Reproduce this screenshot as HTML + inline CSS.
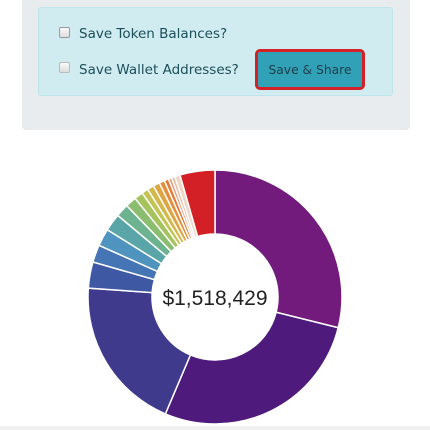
<!DOCTYPE html>
<html><head><meta charset="utf-8"><style>
body{margin:0;width:430px;height:430px;background:#fff;position:relative;overflow:hidden;font-family:"Liberation Sans",sans-serif}
.panel{position:absolute;left:22px;top:-5px;width:388px;height:135px;background:#e9ecef;border-radius:4px}
.info{position:absolute;left:38px;top:7px;width:355px;height:89px;background:#d1ecf1;border:1px solid #bee5eb;border-radius:3px;box-sizing:border-box}
.cb{position:absolute;width:11px;height:11px;border:1px solid #999;border-radius:2px;background:linear-gradient(#fafafa,#ddd);box-sizing:border-box}
.lbl{position:absolute;color:#1b4f5a;font-family:"DejaVu Sans","Liberation Sans",sans-serif;font-size:13.5px}
.btn{position:absolute;left:255px;top:49px;width:110px;height:41px;border:3px solid #d42027;border-radius:5px;box-sizing:border-box;background:#31a1b8;color:#1d3d48;font-size:12.3px;font-family:"DejaVu Sans",sans-serif;text-align:center;line-height:36px}
.line{position:absolute;left:0;top:426px;width:430px;height:4px;background:#f0f0f0}
</style></head><body>
<div class="panel"></div>
<div class="info"></div>
<div class="cb" style="left:59px;top:27px"></div>
<div class="lbl" style="left:79px;top:26px">Save Token Balances?</div>
<div class="cb" style="left:59px;top:62px;border-color:#bbb"></div>
<div class="lbl" style="left:79px;top:62px">Save Wallet Addresses?</div>
<div class="btn">Save &amp; Share</div>
<svg id="d" width="430" height="430" style="position:absolute;left:0;top:0"></svg>
<div class="line"></div>
<script>
var segs=[[0,104,'#721b7c'],[104,203,'#4e1a7b'],[203,274,'#3f3a8c'],[274,286,'#3f58a3'],[286,294,'#4575b4'],[294,302,'#4e94be'],[302,310,'#5aa5a8'],[310,316,'#6db38f'],[316,321,'#8bbd6e'],[321,325,'#a6c45e'],[325,328,'#c2c453'],[328,331,'#d4b84b'],[331,334,'#dea642'],[334,336.5,'#e38f3b'],[336.5,338.5,'#e37a37'],[338.5,340,'#e3a07f'],[340,341.5,'#e8b8a0'],[341.5,344,'#f0d8c8'],[344,360,'#d31f26']];
var cx=215,cy=297,R=127,r=63,s='';
function p(a,rr){a=a*Math.PI/180;return (cx+rr*Math.sin(a)).toFixed(2)+' '+(cy-rr*Math.cos(a)).toFixed(2)}
segs.forEach(function(g){var l=(g[1]-g[0])>180?1:0;
s+='<path d="M'+p(g[0],R)+' A'+R+' '+R+' 0 '+l+' 1 '+p(g[1],R)+' L'+p(g[1],r)+' A'+r+' '+r+' 0 '+l+' 0 '+p(g[0],r)+'Z" fill="'+g[2]+'" stroke="#fff" stroke-width="1.5"/>';});
s+='<text x="215" y="305" text-anchor="middle" font-family="Liberation Sans,sans-serif" font-size="21" fill="#222">$1,518,429</text>';
document.getElementById('d').innerHTML=s;
</script>
</body></html>
